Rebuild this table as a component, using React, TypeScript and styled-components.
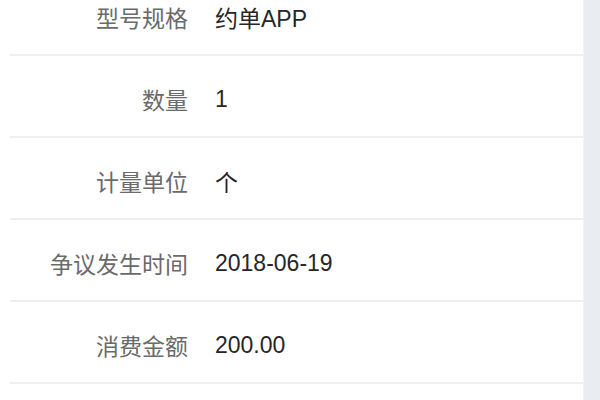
import styled, { createGlobalStyle } from "styled-components";

const GlobalStyle = createGlobalStyle`
  html, body, #root {
    margin: 0;
    height: 100%;
    background: #ffffff;
  }
  body {
    font-family: "Liberation Sans", "Noto Sans CJK SC", sans-serif;
    overflow: hidden;
  }
`;

type Item = { label: string; value: string };

const items: Item[] = [
  { label: "型号规格", value: "约单APP" },
  { label: "数量", value: "1" },
  { label: "计量单位", value: "个" },
  { label: "争议发生时间", value: "2018-06-19" },
  { label: "消费金额", value: "200.00" },
];

const DetailPage = (): JSX.Element => {
  return (
    <Wrapper>
      <GlobalStyle />
      <Content>
        <List>
          {items.map((item) => (
            <Row key={item.label}>
              <Label>{item.label}</Label>
              <Value>{item.value}</Value>
            </Row>
          ))}
        </List>
      </Content>
      <SideStrip />
    </Wrapper>
  );
};

const Wrapper = styled.div`
  display: flex;
  height: 400px;
  width: 600px;
  overflow: hidden;
`;

const Content = styled.div`
  flex: 1;
  overflow: hidden;
`;

const List = styled.div`
  margin-top: -26px;
  display: flex;
  flex-direction: column;
`;

const Row = styled.div`
  display: grid;
  grid-template-columns: 178px 1fr;
  column-gap: 27px;
  align-items: center;
  height: 82px;
  box-sizing: border-box;
  padding-top: 6px;
  margin-left: 10px;
  border-bottom: 2px solid #efefef;
`;

const Label = styled.div`
  text-align: right;
  font-size: 23px;
  color: #6a6a6a;
  white-space: nowrap;
`;

const Value = styled.div`
  font-size: 23px;
  color: #262626;
  white-space: nowrap;
`;

const SideStrip = styled.div`
  width: 16px;
  flex-shrink: 0;
  background: #e9ecf0;
  border-left: 1px solid #f0f2f4;
`;

export default DetailPage;
